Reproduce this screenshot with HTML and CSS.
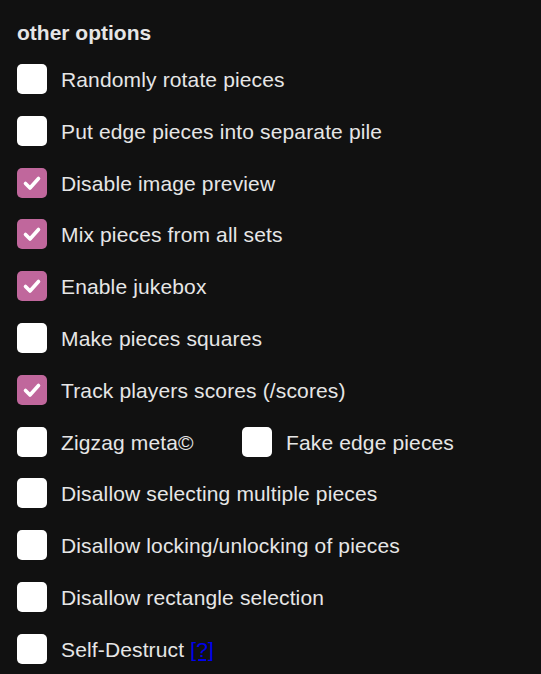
FILE: index.html
```html
<!DOCTYPE html>
<html>
<head>
<meta charset="utf-8">
<link rel="stylesheet" href="styles.css">
</head>
<body>
<div class="panel">
  <h3 class="title">other options</h3>
  <div class="options">
    <label class="opt"><span class="box"></span><span>Randomly rotate pieces</span></label>
    <label class="opt"><span class="box"></span><span>Put edge pieces into separate pile</span></label>
    <label class="opt"><span class="box on"><svg viewBox="0 0 30 30"><path d="M8.5 15.5 L13 20 L21.5 10.5"/></svg></span><span>Disable image preview</span></label>
    <label class="opt"><span class="box on"><svg viewBox="0 0 30 30"><path d="M8.5 15.5 L13 20 L21.5 10.5"/></svg></span><span>Mix pieces from all sets</span></label>
    <label class="opt"><span class="box on"><svg viewBox="0 0 30 30"><path d="M8.5 15.5 L13 20 L21.5 10.5"/></svg></span><span>Enable jukebox</span></label>
    <label class="opt"><span class="box"></span><span>Make pieces squares</span></label>
    <label class="opt"><span class="box on"><svg viewBox="0 0 30 30"><path d="M8.5 15.5 L13 20 L21.5 10.5"/></svg></span><span>Track players scores (/scores)</span></label>
    <div class="pair">
      <label class="opt half"><span class="box"></span><span>Zigzag meta©</span></label>
      <label class="opt"><span class="box"></span><span>Fake edge pieces</span></label>
    </div>
    <label class="opt"><span class="box"></span><span>Disallow selecting multiple pieces</span></label>
    <label class="opt"><span class="box"></span><span>Disallow locking/unlocking of pieces</span></label>
    <label class="opt"><span class="box"></span><span>Disallow rectangle selection</span></label>
    <label class="opt"><span class="box"></span><span>Self-Destruct <a class="help" href="#">[?]</a></span></label>
  </div>
</div>
</body>
</html>
```
FILE: styles.css
```css
html, body {
  margin: 0;
  background: #111111;
}
body {
  font-family: "Liberation Sans", Arial, sans-serif;
  color: #e6e6e6;
}
.panel {
  padding: 22px 17px 0 17px;
}
.title {
  margin: 0 0 20px 0;
  font-size: 21px;
  font-weight: bold;
  line-height: 22px;
}
.options {
  display: flex;
  flex-direction: column;
  gap: 21.8px;
}
.pair {
  display: flex;
  height: 30px;
}
.opt {
  display: flex;
  align-items: center;
  gap: 14px;
  font-size: 21px;
  line-height: 30px;
  height: 30px;
  letter-spacing: 0.14px;
}
.opt > span:last-child {
  padding-top: 2px;
}
.half {
  width: 225px;
}
.box {
  width: 30px;
  height: 30px;
  border-radius: 5px;
  background: #ffffff;
  flex: none;
  display: flex;
}
.box.on {
  background: #c0679c;
}
.box svg {
  width: 30px;
  height: 30px;
}
.box svg path {
  fill: none;
  stroke: #ffffff;
  stroke-width: 3.6;
  stroke-linecap: round;
  stroke-linejoin: round;
}
.help {
  color: #0000ee;
}
```
